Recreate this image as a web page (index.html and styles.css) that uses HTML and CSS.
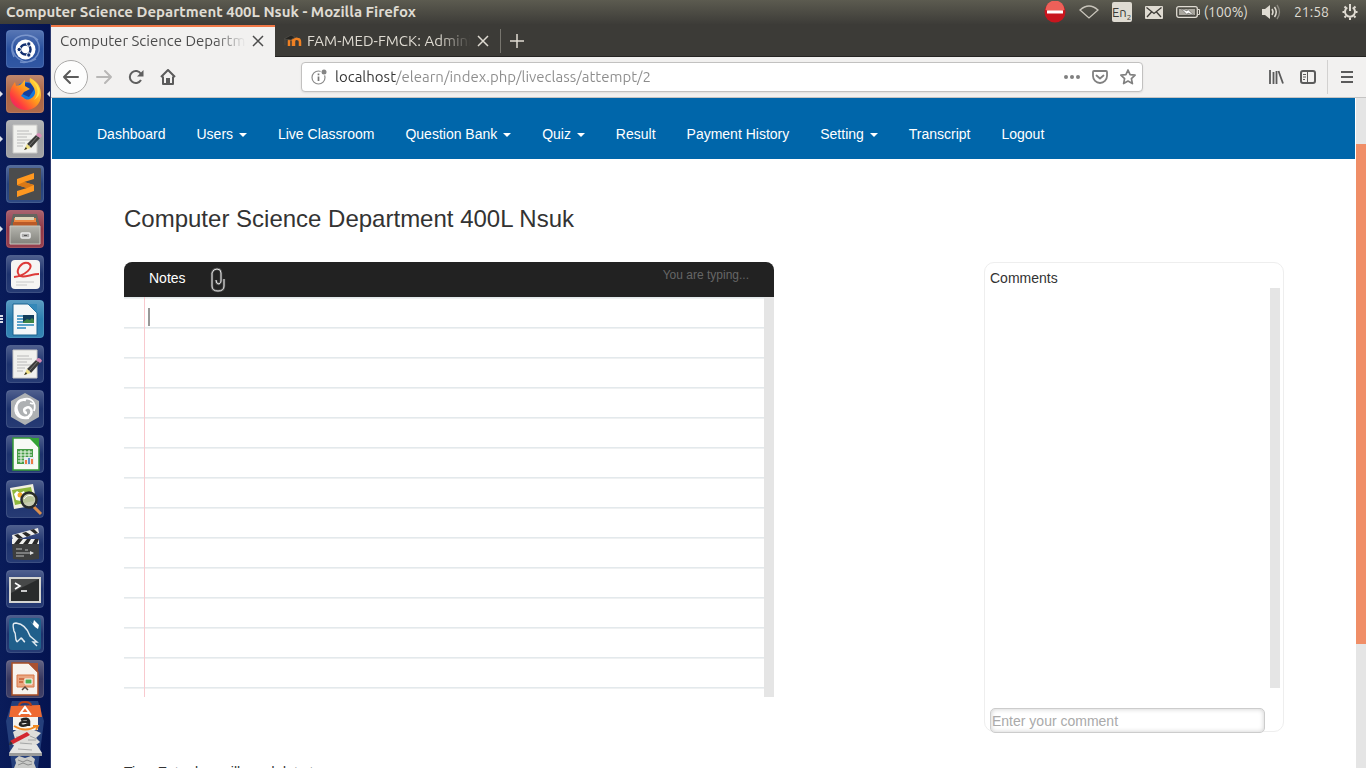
FILE: index.html
```html
<!DOCTYPE html>
<html lang="en">
<head>
<meta charset="utf-8">
<title>Computer Science Department 400L Nsuk</title>
<link rel="stylesheet" href="styles.css">
</head>
<body>
<svg class="defs" aria-hidden="true">
  <defs>
    <linearGradient id="shine" x1="0" y1="0" x2="0" y2="1"><stop offset="0" stop-color="#fff" stop-opacity=".25"/><stop offset=".5" stop-color="#fff" stop-opacity=".04"/><stop offset="1" stop-color="#fff" stop-opacity=".08"/></linearGradient>
    <linearGradient id="fire" x1="1" y1="0" x2="0" y2="1"><stop offset="0" stop-color="#fff04a"/><stop offset=".45" stop-color="#ff9a1c"/><stop offset=".75" stop-color="#ff3a3f"/><stop offset="1" stop-color="#d9168c"/></linearGradient>
    <linearGradient id="cabinet" x1="0" y1="0" x2="0" y2="1"><stop offset="0" stop-color="#b5b5ae"/><stop offset="1" stop-color="#82827c"/></linearGradient>
    <symbol id="frame" viewBox="0 0 38 38"><rect x=".5" y=".5" width="37" height="37" rx="3.500" fill="url(#shine)" stroke="#fff" stroke-opacity=".14"/></symbol>
    <symbol id="editor" viewBox="0 0 38 38"><path d="M7 5h24v28H7z" fill="#f1f1ee" stroke="#c9c9c6"/><path d="M11 11h12M11 14h15M11 17h10M11 20h14M11 23h8M11 26h6" stroke="#b9b9b9"/><path d="m21 24 9-9 4 3-9 10z" fill="#3c3c3a"/><path d="m23 26 9-10" stroke="#777"/><path d="m30 15 2-2q3 0 4 3l-2 2z" fill="#d58ab4"/><path d="m21 24 4 4-7 2z" fill="#efe084"/><path d="m18 30 2-3 1 2z" fill="#222"/></symbol>
  </defs>
</svg>

<header class="panel">
  <h1 class="panel-title">Computer Science Department 400L Nsuk - Mozilla Firefox</h1>
  <div class="indicators">
    <button class="ind ind-block" aria-label="Blocked"><svg width="22" height="22" viewBox="0 0 22 22"><circle cx="11" cy="11" r="10.500" fill="#c8151e"/><path d="M1.500 9a9.500 9.500 0 0 1 19 0q-9 4-19 0" fill="#ee6059"/><path d="M3 9.500h16v3H3z" fill="#fff"/></svg></button>
    <button class="ind ind-wifi" aria-label="Network"><svg width="20" height="14" viewBox="0 0 20 14"><path d="M1 5q9-8 18 0l-9 8z" fill="none" stroke="#c9c5bb" stroke-width="1.300"/></svg></button>
    <button class="ind ind-lang" aria-label="Keyboard layout"><span class="lang">En<sub>2</sub></span></button>
    <button class="ind ind-mail" aria-label="Messages"><svg width="18" height="13" viewBox="0 0 18 13"><rect width="18" height="13" rx="1" fill="#dfdbd2"/><path d="m1.500 1.500 7.500 6 7.500-6M2 11l4.500-5M16 11l-4.500-5" fill="none" stroke="#3d3b36" stroke-width="1.300"/></svg></button>
    <button class="ind ind-battery"><svg width="24" height="12" viewBox="0 0 24 12"><rect x=".7" y=".7" width="20.600" height="10.600" rx="2" fill="none" stroke="#dfdbd2" stroke-width="1.300"/><rect x="3" y="3" width="16" height="6" fill="#aaa79f"/><path d="M22 3.500h1.500v5H22" fill="none" stroke="#dfdbd2"/><path d="m5 2.500 6 2.500 1-1.500 6 6-6-2.500-1 1.500z" fill="#fff" stroke="#3d3b36" stroke-width=".5"/></svg>(100%)</button>
    <button class="ind ind-sound" aria-label="Volume"><svg width="20" height="16" viewBox="0 0 20 16"><path d="M1 5h3l5-4v14l-5-4H1z" fill="#dfdbd2"/><path d="M11 5q2 3 0 6M13.500 3q3.500 5 0 10" fill="none" stroke="#dfdbd2" stroke-width="1.500"/><path d="M16 1q5 7 0 14" fill="none" stroke="#8b8880" stroke-width="1.300"/></svg></button>
    <button class="ind ind-clock">21:58</button>
    <button class="ind ind-gear" aria-label="System menu"><svg width="16" height="16" viewBox="0 0 16 16"><path d="M5.300 3.500a5 5 0 1 0 5.400 0" fill="none" stroke="#dfdbd2" stroke-width="2"/><path d="M8 0v7M.5 8h2M13.500 8h2M2.500 2.500 4 4M13.500 2.500 12 4M2.500 13.500 4 12M13.500 13.500 12 12M8 13.500V16" stroke="#dfdbd2" stroke-width="2"/></svg></button>
  </div>
</header>

<div class="workspace">
  <nav class="launcher" aria-label="Launcher">
    <button class="tile" aria-label="Search"><svg viewBox="0 0 38 38"><rect width="38" height="38" rx="4" fill="#20499b"/><use href="#frame"/><path d="M8 27C-1 8 19-1 32 10M28 7c12 12 2 28-14 25M7 12c-4 14 11 25 23 17" fill="none" stroke="#9fb6e3" stroke-width="1.500" opacity=".6"/><circle cx="19.500" cy="19.500" r="10" fill="#fff"/><circle cx="19.500" cy="19.500" r="5" fill="none" stroke="#122f70" stroke-width="2.500"/><g fill="#122f70" stroke="#fff"><circle cx="13.200" cy="19.500" r="2.200"/><circle cx="22.800" cy="14" r="2.200"/><circle cx="22.800" cy="25" r="2.200"/></g></svg></button>
    <button class="tile running active" aria-label="Firefox"><svg viewBox="0 0 38 38"><rect width="38" height="38" rx="4" fill="#a95e3c"/><use href="#frame"/><circle cx="20" cy="18" r="11" fill="#1677db"/><path d="M17 9q8-3 12 4l-6 9-7-3z" fill="#173f9c"/><path d="M24 3c8 4 11 9 11 17 0 9-7 15-15 15S4 29 4 20c0-6 2-9 5-13l1 4 4-1 5-5 0 6 5 3-6 3-3 4c3 1 4 5 9 3 8-4 5-10 2-14-2-3-3-4-2-7z" fill="url(#fire)"/><path d="M26 5c6 6 8 13 2 20 8-5 8-12-2-20" fill="#ffe44a"/></svg></button>
    <button class="tile running" aria-label="Text Editor"><svg viewBox="0 0 38 38"><rect width="38" height="38" rx="4" fill="#999a9d"/><use href="#frame"/><use href="#editor"/></svg></button>
    <button class="tile" aria-label="Sublime Text"><svg viewBox="0 0 38 38"><rect width="38" height="38" rx="4" fill="#1c3a78"/><use href="#frame"/><rect x="3" y="3" width="32" height="32" rx="1" fill="#4b4c4d"/><path d="m11 14 17-6v6l-10 3 10 3v6l-17 6v-6l10-3-10-3z" fill="#ff9820"/><path d="m11 20 10 3 7-3-10-3z" fill="#d97816"/></svg></button>
    <button class="tile running" aria-label="Files"><svg viewBox="0 0 38 38"><rect width="38" height="38" rx="4" fill="#8c2f3f"/><use href="#frame"/><path d="m7 4 24 0 3 12H4z" fill="#64655f"/><path d="M8 8h22v9H8z" fill="#eb8842"/><path d="M9 7h19v3H9z" fill="#ded5b9"/><path d="M7 12h24v5H7z" fill="#ba5a27"/><path d="M4 16h30v18H4z" fill="url(#cabinet)" stroke="#c9c9c1"/><rect x="15" y="23" width="9" height="5" rx="1" fill="#aaa" stroke="#eee" stroke-width="1.500"/><path d="M18 25.500h3" stroke="#555"/></svg></button>
    <button class="tile" aria-label="Document Viewer"><svg viewBox="0 0 38 38"><rect width="38" height="38" rx="4" fill="#142a68"/><use href="#frame"/><rect x="5" y="5" width="29" height="29" rx="4" fill="#f6f5f3"/><path d="M8 22c10-1 22-10 14-14-6-2-13 7-9 12 3 4 12-1 20-1" fill="none" stroke="#dd3a38" stroke-width="2"/><path d="M10 27h18M10 30h11" stroke="#c8c8c8"/></svg></button>
    <button class="tile running many" aria-label="Writer"><svg viewBox="0 0 38 38"><rect width="38" height="38" rx="4" fill="#237aad"/><use href="#frame"/><path d="M7 4h15l9 9v22H7z" fill="#f4f7f8" stroke="#1a628e"/><path d="M22 4h9v9z" fill="#3488b8"/><path d="M11 16h17M11 19h17M11 22h17M11 25h17M11 28h9" stroke="#5ca3ca" stroke-width="2"/><path d="M17 15h11v8H17z" fill="#123e5c"/><path d="m17 22 4-3 3 1 2-2 2 2v3H17z" fill="#3d8445"/></svg></button>
    <button class="tile" aria-label="Notes"><svg viewBox="0 0 38 38"><rect width="38" height="38" rx="4" fill="#142a68"/><use href="#frame"/><use href="#editor"/></svg></button>
    <button class="tile" aria-label="Bluefish"><svg viewBox="0 0 38 38"><rect width="38" height="38" rx="4" fill="#142a68"/><use href="#frame"/><path d="m19 3 14 8v16l-14 8-14-8V11z" fill="#aeb1b3"/><path d="M20 10c-8-2-12 6-8 13 3 6 10 6 13 1 2-5-2-8-5-6-3 1-2 5 1 5" fill="none" stroke="#fff" stroke-width="2.500"/><path d="M16 10c8-4 15 2 12 11M10 15c-3 9 3 15 13 13M24 13l3 1" fill="none" stroke="#fff" stroke-width="1.800"/></svg></button>
    <button class="tile" aria-label="Calc"><svg viewBox="0 0 38 38"><rect width="38" height="38" rx="4" fill="#142a68"/><use href="#frame"/><path d="M7 3h18l8 9v23H7z" fill="#f7faf5" stroke="#349b36" stroke-width="1.500"/><path d="M23 3h10v10z" fill="#34a335"/><path d="M11 14h16v15H11z" fill="#469c46"/><path d="M12 17h14M12 20h14M12 23h14M12 26h14M15 15v13M19 15v13M23 15v13" stroke="#eef8ec"/><path d="M18 22h10v8H18z" fill="#e6ebef"/><path d="M20 29v-4M26 29v-5" stroke="#ee7b43" stroke-width="2"/><path d="M23 29v-6" stroke="#5b8fc7" stroke-width="2"/></svg></button>
    <button class="tile" aria-label="Image Viewer"><svg viewBox="0 0 38 38"><rect width="38" height="38" rx="4" fill="#142a68"/><use href="#frame"/><path d="m4 8 23-4 4 21-23 4z" fill="#f1efdf"/><path d="m6 10 19-3 3 14-19 4z" fill="#8eb83d"/><path d="m8 14 3-3 3 2 4-2 2 5-5 5-5-1z" fill="#fff"/><circle cx="14" cy="15" r="2.500" fill="#f2aa2c"/><path d="m27 26 8 8" stroke="#db8e4c" stroke-width="3"/><circle cx="23" cy="20" r="7.500" fill="#bfc4a8" fill-opacity=".85" stroke="#292b2b" stroke-width="2.500"/><path d="M18 19q3-5 9-3" fill="none" stroke="#fff"/></svg></button>
    <button class="tile" aria-label="Videos"><svg viewBox="0 0 38 38"><rect width="38" height="38" rx="4" fill="#142a68"/><use href="#frame"/><path d="M6 17h27v17q-13 2-26 0z" fill="#3d3e3e"/><path d="M6 10 32 3l1 5-26 8zM6 14h27v5H6z" fill="#efefed"/><path d="m8 10 5 4 4-1-5-4zm8-2 5 4 4-2-5-3zm8-3 5 4 3-1-4-4zM8 19l4-5h5l-4 5zm9 0 4-5h4l-3 5zm9 0 3-5h4l-2 5z" fill="#282828"/><path d="M10 24h6M19 25h3M10 28h17M10 31h8" stroke="#bababa"/><path d="M24 26v4l4-2z" fill="#ddd"/></svg></button>
    <button class="tile" aria-label="Terminal"><svg viewBox="0 0 38 38"><rect width="38" height="38" rx="4" fill="#142a68"/><use href="#frame"/><path d="M3 7h32v26H3z" fill="#d5d5d1"/><path d="M5 9h28v22H5z" fill="#292b2b"/><path d="M5 9h28l-28 14z" fill="#474949"/><path d="m9 13 5 3-5 3M15 21h6" fill="none" stroke="#fff" stroke-width="1.600"/></svg></button>
    <button class="tile" aria-label="MySQL Workbench"><svg viewBox="0 0 38 38"><rect width="38" height="38" rx="4" fill="#142a68"/><use href="#frame"/><rect x="3" y="3" width="32" height="32" rx="3" fill="#205f8b"/><path d="M11 27c-3-5 0-7-3-11-1-5-2-8 2-8 8 1 12 7 14 13l7 6-4 0 4 4M11 27l4-4c2 1 2 3 4 4" fill="none" stroke="#e1eaf0" stroke-width="1.400"/><path d="m24 6 3 3 1-4 5 5-1 4-3-2z" fill="#fff"/></svg></button>
    <button class="tile" aria-label="Impress"><svg viewBox="0 0 38 38"><rect width="38" height="38" rx="4" fill="#2f2f5a"/><use href="#frame"/><path d="M6 3h17l9 9v23H6z" fill="#f7f3ee" stroke="#a84e25" stroke-width="1.500"/><path d="M22 3h10v10z" fill="#aa5130"/><path d="M11 15h17v12H11z" fill="#e9a782" stroke="#d87747"/><path d="M13 19h5M13 22h4" stroke="#c75e35" stroke-width="1.500"/><path d="M19 19h7v5h-7z" fill="#4fae53" stroke="#fff"/><path d="M16 30l3-3 3 3" fill="none" stroke="#57463e" stroke-width="1.500"/></svg></button>
    <button class="stack" aria-label="More applications"><svg viewBox="0 0 38 69"><path d="M6 2h26l6 20-6 47H6L0 22z" fill="#253f7b"/><path d="M9 60l4-3 6 2 6-2 4 3-1 4 2 5H8l2-5z" fill="#c9cac8"/><path d="m12 61 5 2 4-2 5 2M12 66l5-2 5 2 4-1" fill="none" stroke="#8b8c8c"/><path d="m7 33 5-3 16 1 7 3-5 5 4 4-8 6H11l-5-4 3-5z" fill="#deddda"/><path d="M10 38h8M24 37l7 3M14 44l12 1M22 41h8" stroke="#a4a6a6"/><path d="m9 45 22 1 5 8H3z" fill="#e4e4e2"/><path d="M3 54h33v3H3z" fill="#999a9a"/><path d="m12 50 14 1" stroke="#aaa"/><path d="m4 42 17-9 3 3-17 9z" fill="#d32730"/><path d="m7 45-3-3-1 4z" fill="#333"/><path d="M7 17h25v14H7z" fill="#f4f3ef"/><path d="M15 21q7-3 8 1v5M23 23q-9-1-9 2.500 3 3 9-1" fill="none" stroke="#222" stroke-width="2.500"/><path d="M8 27q11 7 23 0m-4 0h5l-2 4" fill="none" stroke="#f18a21" stroke-width="1.800"/><path d="m5 7 29-1 2 12H3z" fill="#ee6a32"/><path d="M13 7q0-4 6-4t6 4" fill="none" stroke="#b93d14" stroke-width="2"/><path d="m13 16 6-8 6 8M15 14h8" fill="none" stroke="#fff" stroke-width="2"/></svg></button>
  </nav>

  <div class="browser">
    <div class="tabs" role="tablist">
      <div class="tab tab-current">
        <button class="tab-label" role="tab" aria-selected="true">Computer Science Department</button>
        <button class="close" aria-label="Close tab"><svg width="12" height="12" viewBox="0 0 12 12"><path d="m1 1 10 10M11 1 1 11" stroke="currentColor" stroke-width="1.500"/></svg></button>
      </div>
      <div class="tab">
        <svg class="favicon" width="18" height="14" viewBox="0 0 18 14"><path d="M5 12V7q0-2 2-2t2 2v5M10 12V7q1-3 3.500-2 2.500 0 2.500 3v4" fill="none" stroke="#f08123" stroke-width="2.500"/><path d="m0 5 7-4 4 2-4 3zM1 5v6" fill="#252421" stroke="#53504a" stroke-width=".7"/></svg>
        <button class="tab-label" role="tab" aria-selected="false">FAM-MED-FMCK: Administration</button>
        <button class="close" aria-label="Close tab"><svg width="12" height="12" viewBox="0 0 12 12"><path d="m1 1 10 10M11 1 1 11" stroke="currentColor" stroke-width="1.500"/></svg></button>
      </div>
      <button class="new-tab" aria-label="New tab"><svg width="14" height="14" viewBox="0 0 14 14"><path d="M7 0v14M0 7h14" stroke="currentColor" stroke-width="1.500"/></svg></button>
    </div>

    <div class="toolbar">
      <div class="tools tools-left">
        <button class="back" aria-label="Back"><svg width="18" height="16" viewBox="0 0 18 16"><path d="M16 8H2M8 2 2 8l6 6" fill="none" stroke="#5b5b5b" stroke-width="2" stroke-linejoin="round" stroke-linecap="round"/></svg></button>
        <button class="tool" aria-label="Forward"><svg width="18" height="16" viewBox="0 0 18 16"><path d="M2 8h14M10 2l6 6-6 6" fill="none" stroke="#b8b7b6" stroke-width="2" stroke-linejoin="round" stroke-linecap="round"/></svg></button>
        <button class="tool" aria-label="Reload"><svg width="16" height="16" viewBox="0 0 16 16"><path d="M13 11a6 6 0 1 1 0-6" fill="none" stroke="#5f5f5f" stroke-width="2"/><path d="M15.500 1v6.500H9z" fill="#5f5f5f"/></svg></button>
        <button class="tool" aria-label="Home"><svg width="16" height="16" viewBox="0 0 16 16"><path d="m1 8 7-7 7 7M3 7.500V15h10V7.500" fill="none" stroke="#5b5b5b" stroke-width="2" stroke-linejoin="round"/><path d="M6 9h4v6H6z" fill="#5b5b5b"/></svg></button>
      </div>
      <div class="address">
        <svg width="16" height="16" viewBox="0 0 16 16"><circle cx="7.500" cy="8.500" r="6.500" fill="none" stroke="#8b8b8b" stroke-width="1.200"/><circle cx="13" cy="3" r="3.500" fill="#fff"/><circle cx="13" cy="3" r="2.500" fill="#858585"/><path d="M7.500 7.500V12M7.500 4.500v1.800" stroke="#777" stroke-width="1.700"/></svg>
        <input class="url" type="text" aria-label="Address" value="localhost/elearn/index.php/liveclass/attempt/2">
        <button class="page-action" aria-label="Page actions"><svg width="16" height="16" viewBox="0 0 16 16"><g fill="#808080"><circle cx="2" cy="8" r="2"/><circle cx="8" cy="8" r="2"/><circle cx="14" cy="8" r="2"/></g></svg></button>
        <button class="page-action" aria-label="Save to Pocket"><svg width="16" height="16" viewBox="0 0 16 16"><path d="M2 2h12q1 0 1 1v4a7 7 0 0 1-14 0V3q0-1 1-1z" fill="none" stroke="#808080" stroke-width="1.800"/><path d="m4.500 6.500 3.500 3 3.500-3" fill="none" stroke="#808080" stroke-width="1.800" stroke-linecap="round" stroke-linejoin="round"/></svg></button>
        <button class="page-action" aria-label="Bookmark"><svg width="16" height="16" viewBox="0 0 16 16"><path d="m8 1 2.100 4.700 5 .5-3.700 3.400 1 5L8 12.100l-4.400 2.500 1-5L.9 6.200l5-.5z" fill="none" stroke="#808080" stroke-width="1.700" stroke-linejoin="round"/></svg></button>
      </div>
      <div class="tools tools-right">
        <button class="tool" aria-label="Library"><svg width="16" height="16" viewBox="0 0 16 16"><path d="M2 1v14M5.500 3v12M8.500 2v13M10.500 2l4.500 12.500" stroke="#5b5b5b" stroke-width="1.800"/></svg></button>
        <button class="tool" aria-label="Sidebars"><svg width="16" height="14" viewBox="0 0 16 14"><rect x="1" y="1" width="14" height="12" rx="2" fill="none" stroke="#5b5b5b" stroke-width="2"/><path d="M7.500 1v12M3 4.500h3M3 7h3M3 9.500h2" stroke="#5b5b5b"/></svg></button>
        <button class="tool menu" aria-label="Menu"><svg width="12" height="14" viewBox="0 0 12 14"><path d="M0 2h12M0 7h12M0 12h12" stroke="#5b5b5b" stroke-width="2"/></svg></button>
      </div>
    </div>

    <div class="viewport">
      <div class="page">
        <nav class="navbar" aria-label="Main">
          <a href="#">Dashboard</a>
          <a href="#">Users <span class="caret"></span></a>
          <a href="#">Live Classroom</a>
          <a href="#">Question Bank <span class="caret"></span></a>
          <a href="#">Quiz <span class="caret"></span></a>
          <a href="#">Result</a>
          <a href="#">Payment History</a>
          <a href="#">Setting <span class="caret"></span></a>
          <a href="#">Transcript</a>
          <a href="#">Logout</a>
        </nav>
        <main class="container">
          <h2 class="heading">Computer Science Department 400L Nsuk</h2>
          <div class="columns">
            <section class="notes">
              <div class="notes-head">
                <label for="note">Notes</label>
                <button class="attach" aria-label="Attach file"><svg width="16" height="26" viewBox="0 0 16 26"><path d="M6 13q0 4 3 4 2-1 2-3V6q0-4-4-4T2 6v13q0 5 6 5t6-5v-7" fill="none" stroke="#555" stroke-width="2.500"/><path d="M6 13q0 4 3 4 2-1 2-3V6q0-4-4-4T2 6v13q0 5 6 5t6-5v-7" fill="none" stroke="#e4e4e4"/></svg></button>
                <span class="typing">You are typing...</span>
              </div>
              <div class="notes-body">
                <textarea id="note" spellcheck="false"></textarea>
                <span class="cursor"></span>
                <div class="track"></div>
              </div>
            </section>
            <section class="comments">
              <label for="comment">Comments</label>
              <div class="comment-list"><div class="track"></div></div>
              <input id="comment" type="text" placeholder="Enter your comment">
            </section>
          </div>
          <p class="hint">Tips: Enter key will send data to</p>
        </main>
      </div>
      <div class="page-scroll"><div class="thumb"></div></div>
    </div>
  </div>
</div>
</body>
</html>
```

FILE: styles.css
```css
* { box-sizing: border-box; }
body {
  margin: 0;
  height: 100vh;
  display: flex;
  flex-direction: column;
  overflow: hidden;
  background: #fff;
  font: 14px/20px "Liberation Sans", Arial, sans-serif;
  color: #333;
}
button { border: 0; padding: 0; background: none; font: inherit; color: inherit; }
svg { display: block; flex: none; }
.defs { position: absolute; width: 0; height: 0; }

/* Top panel */
.panel {
  height: 24px;
  flex: none;
  display: flex;
  align-items: center;
  justify-content: space-between;
  padding: 0 8px 0 6px;
  background: linear-gradient(#5c5b50, #3d3c38);
  color: #dfdbd2;
  font: 14px/24px Ubuntu, "Noto Sans", sans-serif;
}
.panel-title { margin: 0; font-size: 15px; line-height: 24px; font-weight: 700; }
.indicators { display: flex; align-items: center; gap: 13px; }
.ind { display: flex; align-items: center; gap: 4px; }
.lang {
  width: 20px;
  height: 20px;
  border-radius: 2px;
  background: #dfdbd2;
  color: #3d3b36;
  font-size: 13px;
  line-height: 20px;
}
.lang sub { font-size: 8px; line-height: 1; vertical-align: -3px; }

/* Launcher */
.workspace { flex: 1; min-height: 0; display: flex; }
.launcher {
  width: 51px;
  flex: none;
  display: flex;
  flex-direction: column;
  align-items: center;
  gap: 7px;
  padding-top: 6px;
  overflow: hidden;
  background: linear-gradient(90deg, #0a1c5a, #041350);
  border-right: 1px solid #2d3b70;
}
.tile { position: relative; width: 38px; height: 38px; flex: none; }
.stack { width: 38px; height: 69px; flex: none; margin-top: -6px; }
.running::before {
  content: "";
  position: absolute;
  left: -6px;
  top: 16px;
  border: 3px solid transparent;
  border-left-color: #dce0ea;
  border-right-width: 0;
}
.active::after {
  content: "";
  position: absolute;
  right: -6px;
  top: 16px;
  border: 3px solid transparent;
  border-right-color: #dce0ea;
  border-left-width: 0;
}
.many::before {
  top: 15px;
  width: 3px;
  height: 8px;
  border: 0;
  background: repeating-linear-gradient(#dce0ea 0 2px, transparent 2px 3px);
}

/* Browser chrome */
.browser {
  flex: 1;
  min-width: 0;
  display: flex;
  flex-direction: column;
}
.tabs {
  height: 33px;
  flex: none;
  display: flex;
  padding-top: 1px;
  background: #3c3b37;
  font: 15px/30px Ubuntu, "Noto Sans", sans-serif;
  color: #dfdbd2;
}
.tab { width: 224px; display: flex; align-items: center; padding: 0 11px 0 9px; }
.tab + .tab { padding-right: 10px; border-bottom: 1px solid #252422; }
.tab-current { border-top: 2px solid #f07746; background: #f2f1f0; color: #4c4c4c; padding-bottom: 2px; }
.tab-label {
  flex: 1;
  min-width: 0;
  overflow: hidden;
  white-space: nowrap;
  text-align: left;
  mask-image: linear-gradient(90deg, #000 calc(100% - 32px), transparent);
}
.close { margin-left: 6px; }
.favicon { margin-right: 5px; }
.new-tab {
  flex: 1;
  padding-left: 11px;
  border-bottom: 1px solid #252422;
  background: linear-gradient(#77756e, #77756e) 1px 4px / 1px 24px no-repeat;
}
.toolbar {
  height: 41px;
  flex: none;
  display: flex;
  align-items: center;
  background: #f2f1f0;
  border-bottom: 1px solid #c5c4c3;
}
.tools { display: flex; align-items: center; }
.tools-left { width: 250px; padding-left: 3px; }
.tools-right { width: 223px; justify-content: flex-end; }
.tool { width: 32px; height: 34px; display: grid; place-items: center; }
.back {
  width: 34px;
  height: 34px;
  display: grid;
  place-items: center;
  border: 1px solid #aaa9a8;
  border-radius: 50%;
  background: #fdfdfd;
}
.menu { width: 39px; margin-left: 3px; border-left: 1px solid #d2d1d0; }
.address {
  flex: 1;
  min-width: 0;
  height: 30px;
  display: flex;
  align-items: center;
  gap: 12px;
  padding: 0 6px 0 9px;
  border: 1px solid #c2c1c0;
  border-radius: 4px;
  background: #fff;
  box-shadow: 0 1px 2px rgba(0, 0, 0, .08);
}
.url {
  flex: 1;
  min-width: 0;
  margin-left: -4px;
  border: 0;
  padding: 0;
  outline: 0;
  font: 15px/24px Ubuntu, "Noto Sans", sans-serif;
  color: transparent;
  background: linear-gradient(90deg, #333 61px, #8c8c8c 61px);
  background-clip: text;
}

/* Page */
.viewport { flex: 1; min-height: 0; display: flex; padding-left: 1px; }
.page { flex: 1; min-width: 0; overflow: hidden; }
.page-scroll { width: 11px; padding-top: 46px; background: #e5e5e5; border-left: 1px solid #fff; }
.thumb { height: 500px; background: #f08e67; }
.navbar { display: flex; gap: 1px; padding: 26px 30px 15px; background: #0066aa; }
.navbar a { padding: 0 15px; color: #fff; text-decoration: none; }
.caret {
  display: inline-block;
  margin-left: 2px;
  vertical-align: middle;
  border-top: 4px solid #fff;
  border-left: 4px solid transparent;
  border-right: 4px solid transparent;
}
.container { padding: 45px 71px 0 72px; }
.heading { margin: 0; font-size: 24px; line-height: 30px; font-weight: 400; }
.columns { display: flex; justify-content: space-between; align-items: flex-start; margin-top: 28px; }
.notes { width: 650px; }
.notes-head {
  display: flex;
  height: 35px;
  padding: 3px 25px;
  border-radius: 8px 8px 0 0;
  background: #222;
  color: #fff;
}
.notes-head label { line-height: 26px; }
.attach { margin-left: 24px; align-self: center; }
.typing { margin-left: auto; font-size: 12px; color: #666; }
.notes-body { position: relative; display: flex; height: 400px; }
.notes-body textarea {
  flex: 1;
  min-width: 0;
  resize: none;
  border: 0;
  outline: 0;
  padding: 5px 5px 5px 25px;
  font: 14px/30px "Liberation Sans", Arial, sans-serif;
  color: #333;
  background:
    linear-gradient(#f8c9ce, #f8c9ce) 20px 0 / 1px 100% no-repeat,
    linear-gradient(#e3e9ec 1px, #eff1f2 1px 2px, #fff 2px) 0 0 / 100% 30px;
}
.cursor { position: absolute; left: 24px; top: 11px; width: 2px; height: 18px; background: #999; }
.track { width: 10px; background: #e5e5e5; }
.comments {
  width: 300px;
  height: 470px;
  padding: 5px 3px 0 5px;
  border: 1px solid #eee;
  border-radius: 10px;
}
.comments label { display: block; }
.comment-list { display: flex; justify-content: flex-end; height: 400px; margin-bottom: 20px; }
.comments input {
  width: 275px;
  height: 25px;
  padding: 0 1px;
  border: 1px solid #ccc;
  border-radius: 5px;
  background: #fff;
  box-shadow: inset 0 0 5px rgba(0, 0, 0, .2);
  font: 14px/20px "Liberation Sans", Arial, sans-serif;
}
.comments input::placeholder { color: #aaa; }
.hint { margin: 30px 0 0; }
```
